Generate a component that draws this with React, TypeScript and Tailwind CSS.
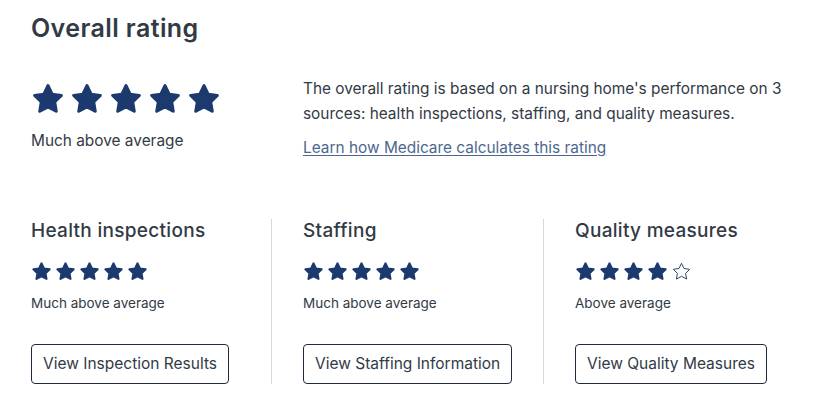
import React from 'react'

const STAR_POINTS = '12,2.6 14.9,8.6 21.4,9.5 16.7,14.1 17.8,20.6 12,17.5 6.2,20.6 7.3,14.1 2.6,9.5 9.1,8.6'

function Star({ filled, size }: { filled: boolean; size: number }) {
  return (
    <svg width={size} height={size} viewBox="0 0 24 24" className="shrink-0">
      {filled ? (
        <polygon points={STAR_POINTS} fill="#1c3a6e" stroke="#1c3a6e" strokeWidth="2.2" strokeLinejoin="round" />
      ) : (
        <polygon points={STAR_POINTS} fill="none" stroke="#2a3f66" strokeWidth="1.1" strokeLinejoin="round" />
      )}
    </svg>
  )
}

function Stars({ count, size, gap }: { count: number; size: number; gap: string }) {
  return (
    <div className={`flex items-center ${gap}`}>
      {[0, 1, 2, 3, 4].map((i) => (
        <Star key={i} filled={i < count} size={size} />
      ))}
    </div>
  )
}

const heading = { fontFamily: 'Inter, "Open Sans", sans-serif' }
const body = { fontFamily: 'Inter, "Noto Sans", sans-serif' }

const sections = [
  { title: 'Health inspections', stars: 5, label: 'Much above average', button: 'View Inspection Results' },
  { title: 'Staffing', stars: 5, label: 'Much above average', button: 'View Staffing Information' },
  { title: 'Quality measures', stars: 4, label: 'Above average', button: 'View Quality Measures' },
]

export default function App() {
  return (
    <div className="w-[815px] h-[409px] bg-white text-[#323a45] overflow-hidden" style={body}>
      <div className="pl-[31px] pt-[12px]">
        <h1 className="text-[25px] leading-[32px] font-semibold tracking-[0.4px] text-[#323a45]" style={heading}>
          Overall rating
        </h1>

        <div className="flex mt-[32px]">
          <div className="w-[272px] pt-[6px]">
            <Stars count={5} size={34} gap="gap-[5px]" />
            <div className="mt-[15px] text-[15.4px] leading-[20px]">Much above average</div>
          </div>
          <div className="w-[492px]">
            <p className="text-[15.4px] leading-[25px]">
              The overall rating is based on a nursing home's performance on 3 sources: health inspections,
              staffing, and quality measures.
            </p>
            <a href="#" className="block mt-[12px] text-[15.4px] leading-[20px] text-[#4d6890] underline underline-offset-2">
              Learn how Medicare calculates this rating
            </a>
          </div>
        </div>

        <div className="flex mt-[61px]">
          {sections.map((s, i) => (
            <div
              key={s.title}
              className={
                i === 0
                  ? 'w-[241px] border-r border-[#d9d9d9]'
                  : i === 1
                    ? 'w-[272px] pl-[31px] border-r border-[#d9d9d9]'
                    : 'pl-[31px]'
              }
            >
              <h2 className="text-[19px] leading-[24px] font-medium tracking-[0.3px] text-[#323a45]" style={heading}>
                {s.title}
              </h2>
              <div className="mt-[18px]">
                <Stars count={s.stars} size={21} gap="gap-[3px]" />
              </div>
              <div className="mt-[12px] text-[13.5px] leading-[18px]">{s.label}</div>
              <button className="mt-[32px] h-[40px] px-[11px] border border-[#1f2a3c] rounded-[4px] text-[15.5px] text-[#323a45] bg-white">
                {s.button}
              </button>
            </div>
          ))}
        </div>
      </div>
    </div>
  )
}
